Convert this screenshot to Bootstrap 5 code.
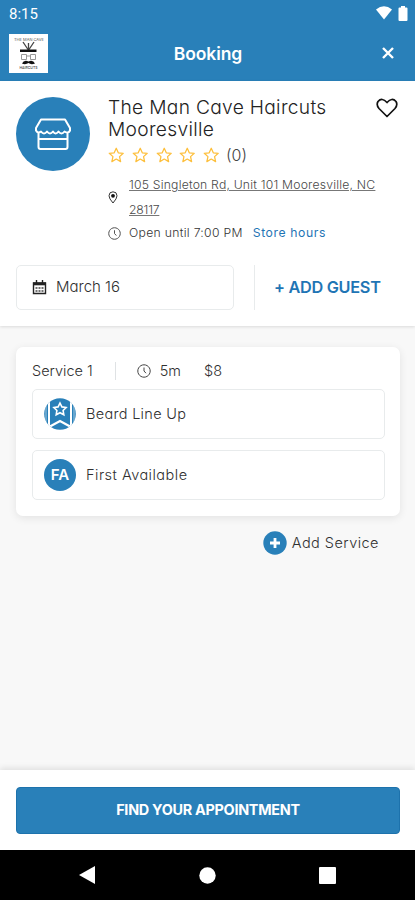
<!DOCTYPE html>
<html lang="en">
<head>
<meta charset="utf-8">
<meta name="viewport" content="width=device-width, initial-scale=1">
<title>Booking</title>
<link href="https://cdn.jsdelivr.net/npm/bootstrap@5.3.0/dist/css/bootstrap.min.css" rel="stylesheet">
<style>
:root{--brand:#2980b9;--line:#e8ebec}
body{font-family:Inter,"Open Sans",sans-serif;font-feature-settings:"cv11";font-weight:300;color:#303030;background:#f8f8f8;height:900px;overflow:hidden}
svg{display:block;flex:none}
.brand-bg{background:var(--brand)}
.brand-text{color:#1f75b5}
.status{height:27px;padding:0 7px 0 9px;font:400 15px Roboto,sans-serif}
.status-icons{gap:6px;margin-top:-1px}
.topbar{height:54px;display:grid;grid-template-columns:39px 1fr 39px;padding:0 8px 2px 9px}
.topbar h1{font-size:17.5px;font-weight:600;letter-spacing:-.1px}
.logo{width:39px;height:39px}
.store{height:245px;padding:16px 16px 0;box-shadow:0 1px 3px rgba(0,0,0,.12)}
.profile{height:168px}
.avatar{width:74px;height:74px}
.info{margin-left:18px}
.name{font-size:19.2px;line-height:22px;letter-spacing:.3px;color:#222;height:43px;margin-top:-1px!important}
.heart{margin:1px 1px 0 0}
.title-row{height:44px}
.stars{gap:7.3px;height:28px}
.count{font-size:16px;color:#444;margin-left:-1px}
.small-line{font-size:12.2px;color:#333}
.place{padding-top:3px}
.pin{margin-right:11px}
.address{line-height:25px;text-decoration:underline;text-decoration-color:#777;color:#484848;letter-spacing:.2px}
.zip{letter-spacing:-.2px}
.hours{height:22px;letter-spacing:.3px}
.hours svg{margin-right:8px}
.hours .brand-text{margin-left:10px;letter-spacing:.6px}
.date{width:218px;height:45px;border:1px solid var(--line);border-radius:5px;font-size:15px;padding-left:15px}
.date svg{margin-right:9px}
.guest{margin-left:20px;height:45px;border-left:1px solid var(--line);padding-left:19px;font-size:16.3px;font-weight:600;letter-spacing:-.3px}
.service{margin:21px 15px 0 16px;height:169px;padding:12px 15px 0 16px;border-radius:7px;box-shadow:0 2px 9px rgba(0,0,0,.09);font-size:14.5px}
.meta{height:24px}
.meta svg{margin-right:9px}
.rule{width:1px;height:18px;background:#dfe2e4;margin:0 21px 0 22px}
.price{margin-left:23px}
.choice{height:50px;border:1px solid var(--line);border-radius:5px;padding-left:11px;gap:10px}
.choice.first{margin-top:6px;letter-spacing:.3px}
.choice.second{margin-top:11px;letter-spacing:.48px}
.initials{width:32px;height:32px;font-size:15px;font-weight:600;letter-spacing:0}
.addservice{font-size:14.5px;letter-spacing:.46px;padding-right:36px;margin-top:15px;gap:5px}
.footer-box{height:80px;padding:17px 15px 0 16px;box-shadow:0 -2px 6px rgba(0,0,0,.1)}
.find{height:47px;border-radius:4px;font-size:14.4px;line-height:43px;padding:0 0 2px;font-weight:700;letter-spacing:-.28px;color:#fff;border:1px solid #1d72ac}
.find:hover{background:#2374aa;color:#fff}
.sysnav{height:50px;padding:0 79px}
</style>
<script src="https://cdn.jsdelivr.net/npm/bootstrap@5.3.0/dist/js/bootstrap.bundle.min.js"></script>
</head>
<body class="d-flex flex-column m-0">
<header class="brand-bg text-white">
  <div class="status d-flex align-items-center justify-content-between"><span>8:15</span>
    <div class="status-icons d-flex align-items-center">
      <svg width="16" height="14" viewBox="0 0 16 14"><path fill="#fff" d="M0 3.600Q8-3.200 16 3.600L8 13.600Z"/></svg>
      <svg width="10" height="15" viewBox="0 0 10 15"><path fill="#fff" d="M3 0h4v1.500h1.500q1 0 1 1V14q0 1-1 1h-7q-1 0-1-1V2.500q0-1 1-1H3z"/></svg>
    </div>
  </div>
  <div class="topbar align-items-center">
    <svg class="logo" viewBox="0 0 39 39"><path fill="#fff" d="M0 0h39v39H0z"/><text x="5" y="6.500" font-size="4" font-weight="400" textLength="30" lengthAdjust="spacingAndGlyphs" fill="#555">THE MAN CAVE</text><path d="M14 8l6 9M25 8l-6 9M19.500 9v9" stroke="#444" stroke-width="1.300"/><path d="M11 15.500h16.500v2.500H11zM13 29.500q2-4 6.500-2 4.500-2 6.500 2-4 1.500-6.500-.500-3 2-6.500.500" fill="#111"/><path d="M12.500 20.500h5v5h-5zM21.500 20.500h5v5h-5zM17.500 22h4" fill="none" stroke="#999"/><text x="10.500" y="35" font-size="4" font-weight="500" textLength="18" lengthAdjust="spacingAndGlyphs" fill="#444">HAIRCUTS</text></svg>
    <h1 class="m-0 text-center">Booking</h1>
    <svg class="mx-auto" width="12" height="12" viewBox="0 0 12 12"><path d="M1 1l10 10M11 1L1 11" stroke="#fff" stroke-width="2.400"/></svg>
  </div>
</header>
<section class="store bg-white">
  <div class="profile d-flex">
    <div class="avatar brand-bg rounded-circle d-flex align-items-center justify-content-center flex-shrink-0">
      <svg width="36" height="32" viewBox="0 0 36 32" fill="none" stroke="#fff" stroke-width="2" stroke-linejoin="round"><path d="M6 1.500h24l5 8.500v2.500q-1.500 3.500-5.500 1-3 4-6 0-3 4-5.500 0-3 4-6 0-3 4-6 0Q3 16 1 12.500V10zM3.500 14.500V29q0 2 2 2h25q2 0 2-2V14.500M3.500 21h29"/></svg>
    </div>
    <div class="info flex-grow-1">
      <div class="title-row d-flex justify-content-between">
        <h2 class="name fw-light m-0 text-nowrap">The Man Cave Haircuts<br>Mooresville</h2>
        <svg class="heart" width="22" height="20" viewBox="0 0 22 20"><path d="M11 18.500L3 10.500Q0 7 2 3.500 6-1 11 4.500 16-1 20 3.500 22 7 19 10.500Z" fill="none" stroke="#111" stroke-width="1.700" stroke-linejoin="round"/></svg>
      </div>
      <div class="stars d-flex align-items-center">
        <svg width="16.500" height="16" viewBox="0 0 17 16"><path id="star" d="M8.500 1l2.100 4.700 5.100.5-3.800 3.500 1.100 5.100-4.500-2.600L4 14.800l1.100-5.100L1.300 6.200l5.100-.5z" fill="none" stroke="#fdbf3c" stroke-width="1.300" stroke-linejoin="round"/></svg>
        <svg width="16.500" height="16" viewBox="0 0 17 16"><use href="#star"/></svg>
        <svg width="16.500" height="16" viewBox="0 0 17 16"><use href="#star"/></svg>
        <svg width="16.500" height="16" viewBox="0 0 17 16"><use href="#star"/></svg>
        <svg width="16.500" height="16" viewBox="0 0 17 16"><use href="#star"/></svg>
        <span class="count">(0)</span>
      </div>
      <div class="place d-flex align-items-center">
        <svg class="pin" width="10" height="13" viewBox="0 0 10 13"><path d="M5 12Q1 7.500 1 4.800a4 4 0 0 1 8 0Q9 7.500 5 12z" fill="none" stroke="#333"/><circle cx="5" cy="4.800" r="1.900" fill="#111"/></svg>
        <span class="small-line address text-nowrap">105 Singleton Rd, Unit 101 Mooresville, NC<br><span class="zip">28117</span></span>
      </div>
      <div class="small-line hours d-flex align-items-center"><svg width="13" height="13" viewBox="0 0 14 14"><path id="clock" d="M7 .8a6.200 6.200 0 1 0 .01 0M7 3.500V7l2 2.200" fill="none" stroke="#444" stroke-width="1"/></svg><span>Open until 7:00 PM</span><span class="brand-text fw-normal">Store hours</span></div>
    </div>
  </div>
  <div class="d-flex">
    <div class="date d-flex align-items-center"><svg width="15" height="15" viewBox="0 0 15 15"><path d="M1.500 3h12v10.500h-12zM4.500 0v3M10.500 0v3" fill="none" stroke="#222" stroke-width="1.400"/><path d="M1 2.500h13v2.800H1z" fill="#222"/><path d="M3.500 8h8M3.500 11h8" stroke="#444" stroke-width="1.300" stroke-dasharray="2 1"/></svg><span>March 16</span></div>
    <div class="guest brand-text d-flex align-items-center">+ ADD GUEST</div>
  </div>
</section>
<main class="flex-grow-1">
  <section class="service bg-white">
    <div class="meta d-flex align-items-center"><span>Service 1</span><i class="rule"></i><svg width="14" height="14" viewBox="0 0 14 14"><use href="#clock"/></svg><span>5m</span><span class="price">$8</span></div>
    <div class="choice first d-flex align-items-center"><svg width="32" height="32" viewBox="0 0 32 32"><defs><clipPath id="round"><circle cx="16" cy="16" r="15.800"/></clipPath></defs><g clip-path="url(#round)"><path fill="#2980b9" d="M0 0h32v32H0z"/><path d="M5 0v32M27 0v32" stroke="#fff" stroke-width="2"/><path d="M2 0v32M30 0v32" stroke="#fff" stroke-width=".600"/><path d="M5 29l11-6 11 6" fill="none" stroke="#fff" stroke-width="2.200"/></g><path d="M16 5l1.900 3.900 4.200.6-3 3 .7 4.200-3.800-2-3.800 2 .7-4.200-3-3 4.200-.6z" fill="none" stroke="#fff" stroke-width="1.600"/></svg><span>Beard Line Up</span></div>
    <div class="choice second d-flex align-items-center"><span class="initials brand-bg rounded-circle text-white d-flex align-items-center justify-content-center">FA</span><span>First Available</span></div>
  </section>
  <div class="addservice d-flex justify-content-end align-items-center"><svg width="24" height="24" viewBox="0 0 24 24"><circle cx="12" cy="12" r="11.700" fill="#2980b9"/><path d="M12 7v10M7 12h10" stroke="#fff" stroke-width="2.800"/></svg><span>Add Service</span></div>
</main>
<footer>
  <div class="footer-box bg-white"><button class="btn find brand-bg w-100">FIND YOUR APPOINTMENT</button></div>
  <div class="sysnav bg-black d-flex align-items-center justify-content-between">
    <svg width="17" height="18" viewBox="0 0 17 18"><path fill="#fff" d="M16 0v18L0 9z"/></svg><svg width="17" height="17" viewBox="0 0 17 17"><circle cx="8.500" cy="8.500" r="8.200" fill="#fff"/></svg><svg width="17" height="17" viewBox="0 0 17 17"><rect width="17" height="17" rx="1" fill="#fff"/></svg>
  </div>
</footer>
</body>
</html>
